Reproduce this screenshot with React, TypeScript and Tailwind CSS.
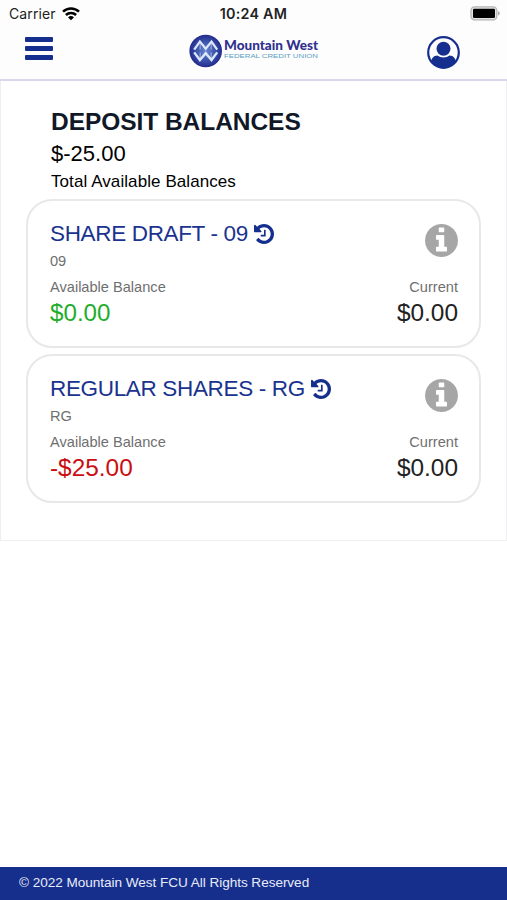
type Account = {
  name: string
  suffix: string
  available: string
  current: string
  overdrawn: boolean
}

const accounts: Account[] = [
  { name: 'SHARE DRAFT', suffix: '09', available: '$0.00', current: '$0.00', overdrawn: false },
  { name: 'REGULAR SHARES', suffix: 'RG', available: '-$25.00', current: '$0.00', overdrawn: true },
]

function WifiIcon() {
  return (
    <svg width="18" height="14" viewBox="0 0 18 14" fill="none" stroke="#000" strokeWidth="2.5">
      <path d="M1 4.7a11.5 11.5 0 0 1 16 0" />
      <path d="M3.9 8a7.3 7.3 0 0 1 10.2 0" />
      <path d="M9 13.2 6.1 10.400a3.900 3.900 0 0 1 5.800 0z" fill="#000" stroke="none" />
    </svg>
  )
}

function HistoryIcon() {
  return (
    <svg width="20" height="20" viewBox="0 128 1536 1536" fill="#152f8e">
      <path d="M1536 896q0 156-61 298t-164 245-245 164-298 61q-172 0-327-72.500t-264-204.500q-7-10-6.500-22.500t8.500-20.500l137-138q10-9 25-9 16 2 23 12 73 95 179 147t225 52q104 0 198.500-40.500t163.500-109.500 109.500-163.500 40.500-198.500-40.500-198.500-109.500-163.500-163.500-109.500-198.500-40.500q-98 0-188 35.500t-160 101.500l137 138q31 30 14 69-17 40-59 40h-448q-26 0-45-19t-19-45v-448q0-42 40-59 39-17 69 14l130 129q107-101 244.500-156.500t284.500-55.500q156 0 298 61t245 164 164 245 61 298zM896 608v448q0 14-9 23t-23 9h-320q-14 0-23-9t-9-23v-64q0-14 9-23t23-9h224v-352q0-14 9-23t23-9h64q14 0 23 9t9 23z" />
    </svg>
  )
}

function InfoIcon() {
  return (
    <svg className="mt-[5px]" width="33" height="33" viewBox="128 128 1536 1536" fill="#a6a6a6">
      <path d="M1152 1376v-160q0-14-9-23t-23-9h-96v-512q0-14-9-23t-23-9h-320q-14 0-23 9t-9 23v160q0 14 9 23t23 9h96v320h-96q-14 0-23 9t-9 23v160q0 14 9 23t23 9h448q14 0 23-9t9-23zm-128-896v-160q0-14-9-23t-23-9h-192q-14 0-23 9t-9 23v160q0 14 9 23t23 9h192q14 0 23-9t9-23zm640 416q0 209-103 385.500t-279.500 279.500-385.500 103-385.500-103-279.500-279.500-103-385.500 103-385.500 279.500-279.500 385.500-103 385.500 103 279.500 279.500 103 385.500z" />
    </svg>
  )
}

function Battery() {
  return (
    <svg width="31" height="15" viewBox="0 0 31 15">
      <rect x="1" y="0.9" width="25.8" height="12.9" rx="3.6" fill="#e4e4e4" stroke="#b4b4b4" strokeWidth="1.3" />
      <rect x="3" y="2.7" width="22" height="9.2" rx="1.2" fill="#000" />
      <path d="M28 5.2v4.2c1.2-.4 1.8-1.2 1.8-2.1s-.6-1.7-1.8-2.1z" fill="#aaa" />
    </svg>
  )
}

function StatusBar() {
  return (
    <div className="grid h-7 grid-cols-3 items-center pl-[9px] pr-[6px] font-['Inter',sans-serif] text-[14px] leading-7 text-[#222]">
      <div className="flex items-center gap-[6px]">
        <span className="tracking-[0.1px]">Carrier</span>
        <WifiIcon />
      </div>
      <span className="-ml-[3px] text-center text-[14.3px] font-semibold tracking-[0.25px] whitespace-nowrap">10:24 AM</span>
      <div className="flex justify-end pb-px">
        <Battery />
      </div>
    </div>
  )
}

function Logo() {
  return (
    <svg width="130" height="34" viewBox="0 0 130 34" role="img" aria-label="Mountain West Federal Credit Union">
      <defs>
        <radialGradient id="disc">
          <stop offset="0" stopColor="#6c88cd" />
          <stop offset="0.55" stopColor="#3b55ae" />
          <stop offset="1" stopColor="#242b8c" />
        </radialGradient>
      </defs>
      <circle cx="16.7" cy="17" r="16.3" fill="url(#disc)" />
      <g fill="none" stroke="#dce8fa">
        <path d="M5.2 15.6 10.9 7.5 16.7 14.800 22.500 7.500 28.200 15.600" strokeWidth="2.2" />
        <path d="M5.200 18.400 10.900 26 16.700 19.200 22.500 26 28.200 18.400" strokeWidth="2.400" />
        <path d="M11.200 9v6.600M22.200 9v6.600M11.200 18.400v6M22.200 18.400v6" strokeWidth="1.300" opacity="0.5" />
      </g>
      <text x="35" y="16.2" textLength="94" lengthAdjust="spacingAndGlyphs" fill="#30308f" fontFamily="Lato, sans-serif" fontWeight="900" fontSize="12.9">
        Mountain West
      </text>
      <text x="35" y="23.9" textLength="94" lengthAdjust="spacingAndGlyphs" fill="#5b9dc0" fontFamily="Liberation Sans, sans-serif" fontSize="5.8">
        FEDERAL CREDIT UNION
      </text>
    </svg>
  )
}

function ProfileIcon() {
  return (
    <svg width="33" height="33" viewBox="0 0 33 33">
      <defs>
        <clipPath id="profile">
          <circle cx="16.5" cy="16.5" r="15.5" />
        </clipPath>
      </defs>
      <g clipPath="url(#profile)" fill="#152f8e">
        <circle cx="16.5" cy="12.8" r="7" />
        <path d="M3.8 27.5c.3-5 2.7-8 6.6-8 1.7 1.3 3.8 2 6.1 2s4.4-.7 6.1-2c3.9 0 6.3 3 6.6 8L22 33H11z" />
      </g>
      <circle cx="16.5" cy="16.5" r="15.3" fill="none" stroke="#152f8e" strokeWidth="2.2" />
    </svg>
  )
}

function Header() {
  return (
    <header className="flex h-[51px] items-start justify-between pl-[25px] pr-[47px]">
      <button className="mt-[9px] flex w-7 flex-col gap-1" aria-label="Menu">
        <span className="h-[5px] w-full rounded-[1px] bg-[#152f8e]" />
        <span className="h-[5px] w-full rounded-[1px] bg-[#152f8e]" />
        <span className="h-[5px] w-full rounded-[1px] bg-[#152f8e]" />
      </button>
      <div className="mt-[6px] ml-[28px]">
        <Logo />
      </div>
      <button className="mt-2" aria-label="Profile">
        <ProfileIcon />
      </button>
    </header>
  )
}

function AccountCard({ account }: { account: Account }) {
  return (
    <section className="flex h-[149px] justify-between rounded-[26px] border-2 border-[#e8e8e8] pt-[18px] pr-[21px] pl-[22px] text-[14.6px] text-[#6f6f6f]">
      <div>
        <h2 className="flex h-[30px] items-center gap-[6px] text-[22.5px] tracking-[-0.34px] text-[#1a338f]">
          {account.name} - {account.suffix}
          <HistoryIcon />
        </h2>
        <p className="mt-[2px] leading-5">{account.suffix}</p>
        <p className="mt-[6px] leading-5">Available Balance</p>
        <p className={account.overdrawn ? 'text-[24.4px] leading-[32px] text-[#c90f12]' : 'text-[24.2px] leading-[32px] text-[#1fad2b]'}>
          {account.available}
        </p>
      </div>
      <div className="flex flex-col items-end">
        <InfoIcon />
        <p className="mt-5 leading-5">Current</p>
        <p className="text-[24.4px] leading-[32px] text-[#222]">{account.current}</p>
      </div>
    </section>
  )
}

export default function App() {
  return (
    <div className="flex h-[900px] w-[507px] flex-col overflow-hidden bg-white font-['Liberation_Sans',Arial,sans-serif]">
      <div className="border-b-2 border-[#d8d7ea] bg-[#fdfdfe]">
        <StatusBar />
        <Header />
      </div>

      <main className="h-[460px] border-x border-b border-[#efeff2] px-[25px] pt-[26px]">
        <div className="pl-[25px] text-black">
          <h1 className="text-[24.5px] leading-[30px] font-bold tracking-[-0.05px] text-[#111827]">DEPOSIT BALANCES</h1>
          <p className="mt-px text-[22px] leading-8">$-25.00</p>
          <p className="mt-px text-[17px] leading-[22px] tracking-[0.08px]">Total Available Balances</p>
        </div>
        <div className="mt-[6px] flex flex-col gap-[6px]">
          {accounts.map((account) => (
            <AccountCard key={account.suffix} account={account} />
          ))}
        </div>
      </main>

      <footer className="mt-auto h-[33px] bg-[#162f8d] pl-[19px] text-[13.6px] leading-[31px] tracking-[-0.05px] text-[#e8ecf8]">
        © 2022 Mountain West FCU All Rights Reserved
      </footer>
    </div>
  )
}
